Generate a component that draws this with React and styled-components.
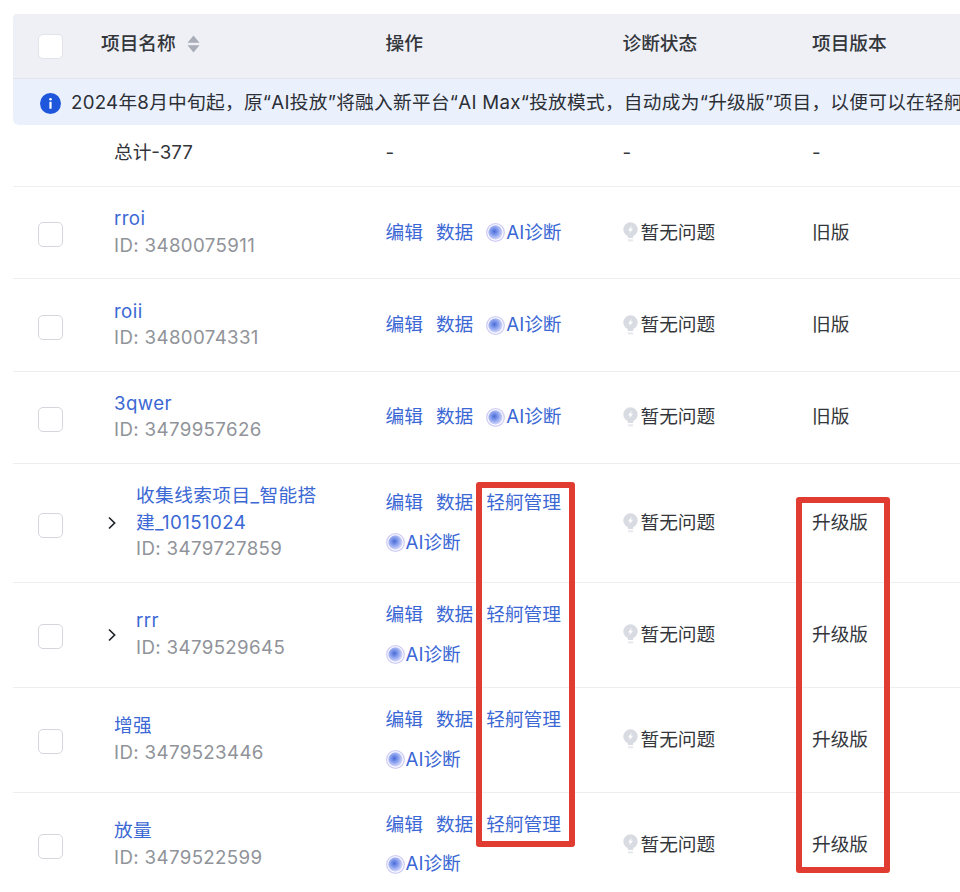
import * as React from 'react';
import styled, { createGlobalStyle } from 'styled-components';

const GlobalStyle = createGlobalStyle`
  html, body {
    margin: 0;
    padding: 0;
    background: #fff;
    height: 892px;
    overflow: hidden;
  }
  body {
    font-family: Inter, "Noto Sans CJK SC", sans-serif;
    font-size: 18.7px;
    line-height: 26px;
    color: #33363b;
  }
`;

const columns = '88px 284.5px 237px 189.5px 1fr';

const projects = [
  { name: ['rroi'], id: '3480075911', version: '旧版' },
  { name: ['roii'], id: '3480074331', version: '旧版' },
  { name: ['3qwer'], id: '3479957626', version: '旧版' },
  { name: ['收集线索项目_智能搭', '建_10151024'], id: '3479727859', version: '升级版', upgraded: true, expandable: true },
  { name: ['rrr'], id: '3479529645', version: '升级版', upgraded: true, expandable: true },
  { name: ['增强'], id: '3479523446', version: '升级版', upgraded: true },
  { name: ['放量'], id: '3479522599', version: '升级版', upgraded: true },
];

function SortIcon() {
  return (
    <svg width="13" height="18" viewBox="0 0 13 18">
      <path d="M6.5 0.5 L12.5 7.8 H0.5 Z" fill="#a9adb8" />
      <path d="M6.5 17.5 L12.5 10.2 H0.5 Z" fill="#a9adb8" />
    </svg>
  );
}

function InfoIcon() {
  return (
    <svg width="21" height="21" viewBox="0 0 21 21">
      <circle cx="10.5" cy="10.5" r="10.5" fill="#1f57dc" />
      <circle cx="10.5" cy="6.2" r="1.3" fill="#fff" />
      <rect x="9.4" y="8.8" width="2.2" height="7" rx="0.6" fill="#fff" />
    </svg>
  );
}

function AiIcon() {
  return (
    <svg width="19" height="19" viewBox="0 0 19 19">
      <defs>
        <radialGradient id="aiCore" cx="0.42" cy="0.42" r="0.62">
          <stop offset="0" stopColor="#4a6bd8" />
          <stop offset="0.45" stopColor="#88a0ee" />
          <stop offset="1" stopColor="#e2e0fd" />
        </radialGradient>
      </defs>
      <circle cx="9.5" cy="9.5" r="8.8" fill="#fff" stroke="#cfcdf7" strokeWidth="1.3" />
      <circle cx="9.5" cy="9.5" r="7.2" fill="url(#aiCore)" />
    </svg>
  );
}

function BulbIcon() {
  return (
    <svg width="15" height="21" viewBox="0 0 15 21">
      <circle cx="7.5" cy="7.5" r="7.2" fill="#d8dbe1" />
      <path d="M4.4 13 H10.6 L10 16 H5 Z" fill="#d8dbe1" />
      <rect x="4.6" y="17.2" width="5.8" height="2.2" rx="1.1" fill="#e8eaee" />
      <path d="M8.8 3.4 L5 8.4 H7.2 L6.3 11.6 L10 6.8 H7.8 Z" fill="#fff" />
    </svg>
  );
}

function ChevronIcon() {
  return (
    <svg width="10" height="14" viewBox="0 0 10 14">
      <path d="M2 1.5 L7.6 7 L2 12.5" fill="none" stroke="#22252a" strokeWidth="1.7" />
    </svg>
  );
}

function ProjectRow({ project }) {
  return (
    <Row>
      <CheckCell>
        <Checkbox />
      </CheckCell>
      <NameCell>
        {project.expandable && (
          <Expander>
            <ChevronIcon />
          </Expander>
        )}
        <div>
          {project.name.map((line) => (
            <NameLine key={line}>{line}</NameLine>
          ))}
          <IdLine>ID: {project.id}</IdLine>
        </div>
      </NameCell>
      <Actions>
        <ActionLink>编辑</ActionLink>
        <ActionLink>数据</ActionLink>
        {project.upgraded && <ActionLink>轻舸管理</ActionLink>}
        <ActionLink $ai>
          <AiIcon />
          AI诊断
        </ActionLink>
      </Actions>
      <Status>
        <BulbIcon />
        暂无问题
      </Status>
      <TextCell>{project.version}</TextCell>
    </Row>
  );
}

export default function App() {
  return (
    <Page>
      <GlobalStyle />
      <Table>
        <HeaderRow>
          <CheckCell>
            <Checkbox $header />
          </CheckCell>
          <HeaderTitle>
            项目名称
            <SortIcon />
          </HeaderTitle>
          <HeaderCell>操作</HeaderCell>
          <HeaderCell>诊断状态</HeaderCell>
          <HeaderCell>项目版本</HeaderCell>
        </HeaderRow>
        <Notice>
          <InfoIcon />
          <NoticeText>2024年8月中旬起，原“AI投放”将融入新平台“AI Max“投放模式，自动成为“升级版”项目，以便可以在轻舸</NoticeText>
        </Notice>
        <TotalRow>
          <span />
          <TotalLabel>总计-377</TotalLabel>
          <span>-</span>
          <span>-</span>
          <span>-</span>
        </TotalRow>
        {projects.map((project) => (
          <ProjectRow key={project.id} project={project} />
        ))}
      </Table>
      <Highlight $left={476} $top={482} $width={99} $height={365} />
      <Highlight $left={796} $top={497} $width={94} $height={376} />
    </Page>
  );
}

const Page = styled.div`
  position: relative;
  width: 960px;
  height: 892px;
  overflow: hidden;
`;

const Table = styled.div`
  margin: 14px 0 0 13px;
  width: 947px;
`;

const HeaderRow = styled.div`
  display: grid;
  grid-template-columns: ${columns};
  align-items: center;
  height: 65px;
  padding-bottom: 5px;
  box-sizing: border-box;
  background: #eef0f5;
  border-bottom: 1px solid #e3e5ea;
  border-radius: 4px 0 0 0;
`;

const HeaderCell = styled.div`
  font-weight: 500;
`;

const HeaderTitle = styled(HeaderCell)`
  display: flex;
  align-items: center;
  gap: 11px;
`;

const Notice = styled.div`
  display: flex;
  align-items: center;
  gap: 10px;
  height: 46px;
  box-sizing: border-box;
  padding: 2px 0 0 27px;
  background: #eaf1fd;
  border-radius: 0 0 0 6px;
  color: #2c2f35;

  svg {
    flex: none;
  }
`;

const NoticeText = styled.span`
  white-space: nowrap;
  letter-spacing: 0.26px;
`;

const Row = styled.div`
  display: grid;
  grid-template-columns: ${columns};
  align-items: center;
  padding: 19.2px 0;
  border-bottom: 1px solid #eceef1;
`;

const TotalRow = styled(Row)`
  height: 62px;
  box-sizing: border-box;
  padding: 14px 0 20px;
`;

const TotalLabel = styled.span`
  padding-left: 13px;
`;

const CheckCell = styled.div`
  display: flex;
  padding-left: 25px;
`;

const Checkbox = styled.div`
  width: 25px;
  height: 25px;
  box-sizing: border-box;
  margin-top: ${(props) => (props.$header ? '6px' : '4px')};
  background: #fff;
  border: 1px solid ${(props) => (props.$header ? '#e2e4ea' : '#d5d7dc')};
  border-radius: 5px;
`;

const NameCell = styled.div`
  display: flex;
  align-items: center;
  padding-left: 13px;
  line-height: 26.5px;
`;

const Expander = styled.span`
  display: flex;
  flex: none;
  width: 22px;
  margin: 0 7px 0 -7px;
`;

const NameLine = styled.div`
  color: #3b68d4;
  letter-spacing: 0.4px;
`;

const IdLine = styled.div`
  color: #909399;
  letter-spacing: 0.36px;
`;

const Actions = styled.div`
  display: flex;
  flex-wrap: wrap;
  align-items: center;
  gap: 13.5px 13px;
  max-width: 190px;
`;

const ActionLink = styled.a`
  display: inline-flex;
  align-items: center;
  gap: 1px;
  color: #3b68d4;
  white-space: nowrap;
`;

const Status = styled.div`
  display: flex;
  align-items: center;
  gap: 3px;
`;

const TextCell = styled.div``;

const Highlight = styled.div`
  position: absolute;
  left: ${(props) => props.$left}px;
  top: ${(props) => props.$top}px;
  width: ${(props) => props.$width}px;
  height: ${(props) => props.$height}px;
  box-sizing: border-box;
  border: 6px solid #e03c31;
  border-radius: 3px;
`;
